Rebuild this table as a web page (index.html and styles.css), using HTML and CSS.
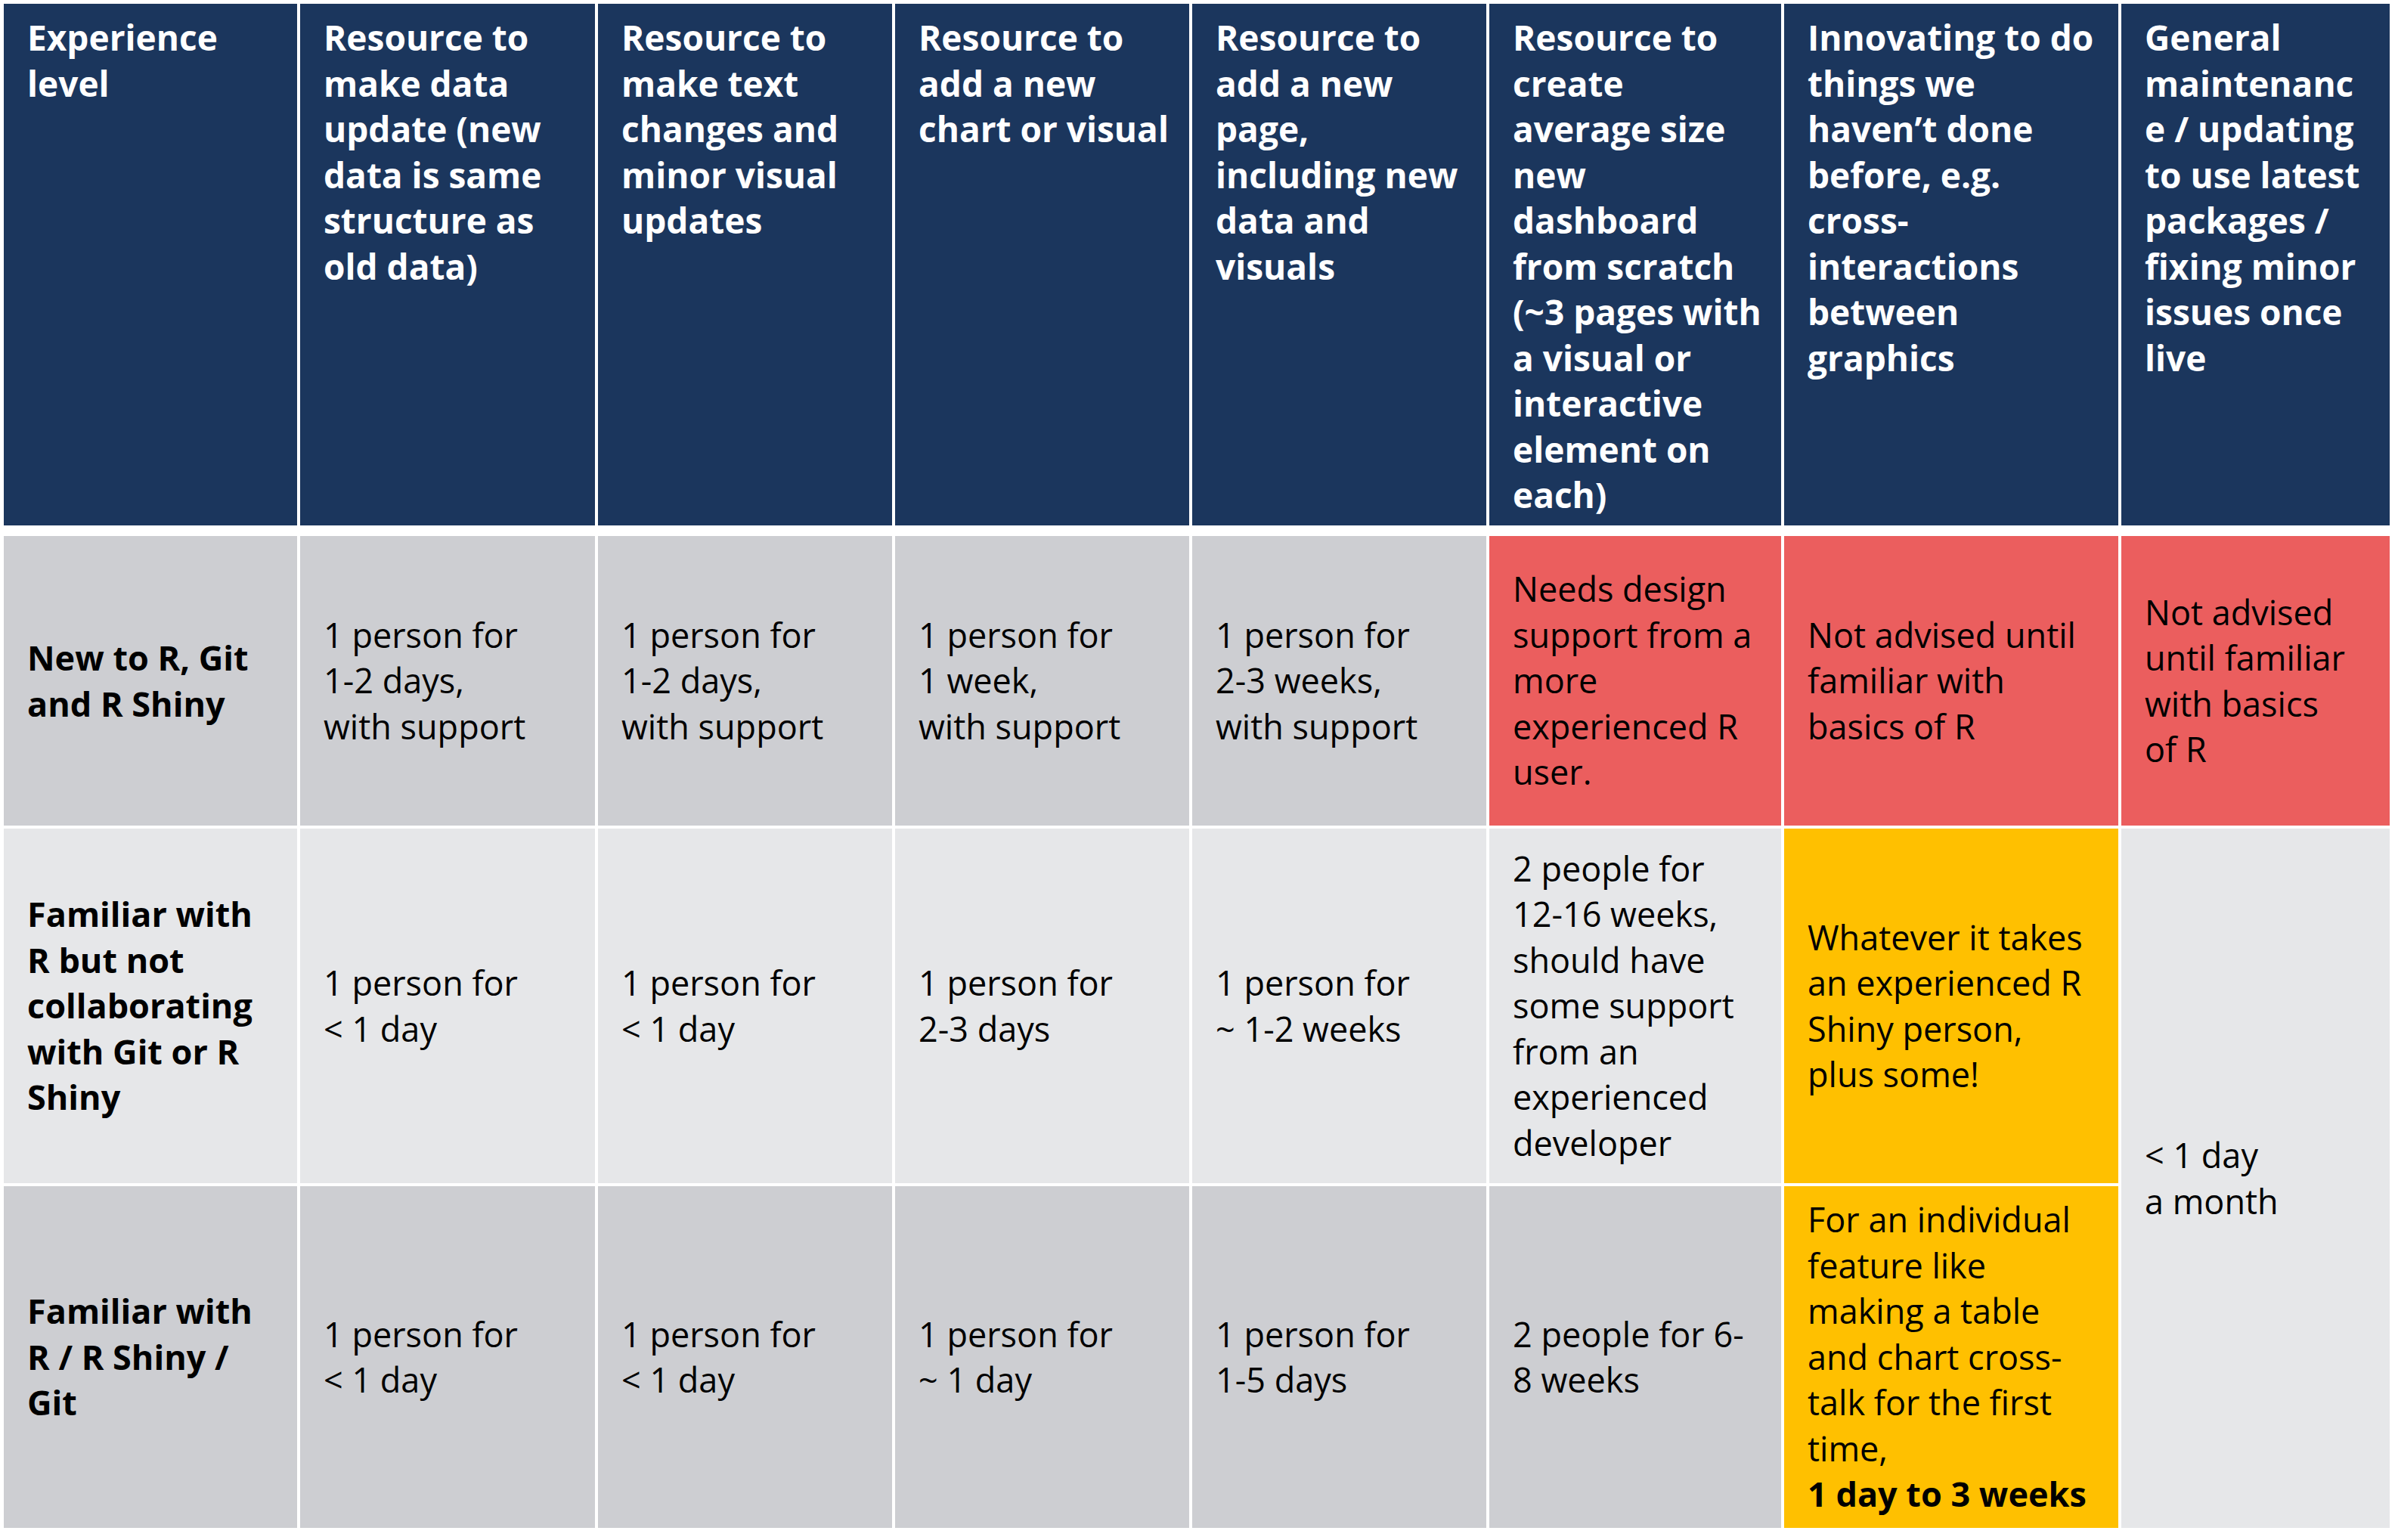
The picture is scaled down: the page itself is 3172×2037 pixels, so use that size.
FILE: index.html
```html
<!DOCTYPE html>
<html lang="en">
<head>
<meta charset="utf-8">
<title>R Shiny resource estimates</title>
<link rel="stylesheet" href="styles.css">
</head>
<body>
<table class="matrix">
  <colgroup>
    <col class="c1"><col class="c2"><col class="c3"><col class="c4"><col class="c5"><col class="c6"><col class="c7"><col class="c8">
  </colgroup>
  <thead>
    <tr class="head-row">
      <th>Experience<br>level</th>
      <th>Resource to<br>make data<br>update (new<br>data is same<br>structure as<br>old data)</th>
      <th>Resource to<br>make text<br>changes and<br>minor visual<br>updates</th>
      <th>Resource to<br>add a new<br>chart or visual</th>
      <th>Resource to<br>add a new<br>page,<br>including new<br>data and<br>visuals</th>
      <th>Resource to<br>create<br>average size<br>new<br>dashboard<br>from scratch<br>(~3 pages with<br>a visual or<br>interactive<br>element on<br>each)</th>
      <th>Innovating to do<br>things we<br>haven’t done<br>before, e.g.<br>cross-<br>interactions<br>between<br>graphics</th>
      <th>General<br>maintenanc<br>e / updating<br>to use latest<br>packages /<br>fixing minor<br>issues once<br>live</th>
    </tr>
  </thead>
  <tbody>
    <tr class="row-new">
      <th class="level">New to R, Git<br>and R Shiny</th>
      <td>1 person for<br>1-2 days,<br>with support</td>
      <td>1 person for<br>1-2 days,<br>with support</td>
      <td>1 person for<br>1 week,<br>with support</td>
      <td>1 person for<br>2-3 weeks,<br>with support</td>
      <td class="red">Needs design<br>support from a<br>more<br>experienced R<br>user.</td>
      <td class="red">Not advised until<br>familiar with<br>basics of R</td>
      <td class="red">Not advised<br>until familiar<br>with basics<br>of R</td>
    </tr>
    <tr class="row-mid">
      <th class="level">Familiar with<br>R but not<br>collaborating<br>with Git or R<br>Shiny</th>
      <td>1 person for<br>&lt; 1 day</td>
      <td>1 person for<br>&lt; 1 day</td>
      <td>1 person for<br>2-3 days</td>
      <td>1 person for<br>~ 1-2 weeks</td>
      <td>2 people for<br>12-16 weeks,<br>should have<br>some support<br>from an<br>experienced<br>developer</td>
      <td class="amber">Whatever it takes<br>an experienced R<br>Shiny person,<br>plus some!</td>
      <td class="merged" rowspan="2">&lt; 1 day<br>a month</td>
    </tr>
    <tr class="row-exp">
      <th class="level">Familiar with<br>R / R Shiny /<br>Git</th>
      <td>1 person for<br>&lt; 1 day</td>
      <td>1 person for<br>&lt; 1 day</td>
      <td>1 person for<br>~ 1 day</td>
      <td>1 person for<br>1-5 days</td>
      <td>2 people for 6-<br>8 weeks</td>
      <td class="amber">For an individual<br>feature like<br>making a table<br>and chart cross-<br>talk for the first<br>time,<br><strong>1 day to 3 weeks</strong></td>
    </tr>
  </tbody>
</table>
</body>
</html>
```

FILE: styles.css
```css
html, body {
  margin: 0;
  padding: 0;
  background: #ffffff;
}

body {
  width: 3172px;
  height: 2037px;
  overflow: hidden;
}

.matrix {
  margin: 1px 0 0 1px;
  width: 3164px;
  table-layout: fixed;
  border-collapse: separate;
  border-spacing: 4px;
  font-family: "Open Sans", "Noto Sans", sans-serif;
  font-size: 45px;
  line-height: 60.5px;
  color: #000000;
}

.c1 { width: 388px; }
.c2 { width: 390px; }
.c3 { width: 389px; }
.c4 { width: 389px; }
.c5 { width: 389px; }
.c6 { width: 386px; }
.c7 { width: 442px; }
.c8 { width: 355px; }

.matrix th,
.matrix td {
  padding: 0 6px 0 31px;
  white-space: nowrap;
  text-align: left;
  vertical-align: middle;
}

.head-row { height: 700px; }

.head-row th {
  background: #1b365d;
  background-clip: padding-box;
  border-bottom: 10px solid transparent;
  color: #ffffff;
  font-size: 46px;
  font-weight: 700;
  vertical-align: top;
  padding-top: 14px;
}

.row-new { height: 383px; }
.row-mid { height: 469px; }
.row-exp { height: 452px; }

.row-new th, .row-new td { background: #cdced2; }
.row-mid th, .row-mid td { background: #e6e7e9; }
.row-exp th, .row-exp td { background: #cdced2; }

.level { font-weight: 700; }

.matrix td.red { background: #eb5e5e; }
.matrix td.amber { background: #ffc000; }
.matrix td.merged { background: #e6e7e9; }

strong { font-weight: 700; }
```
